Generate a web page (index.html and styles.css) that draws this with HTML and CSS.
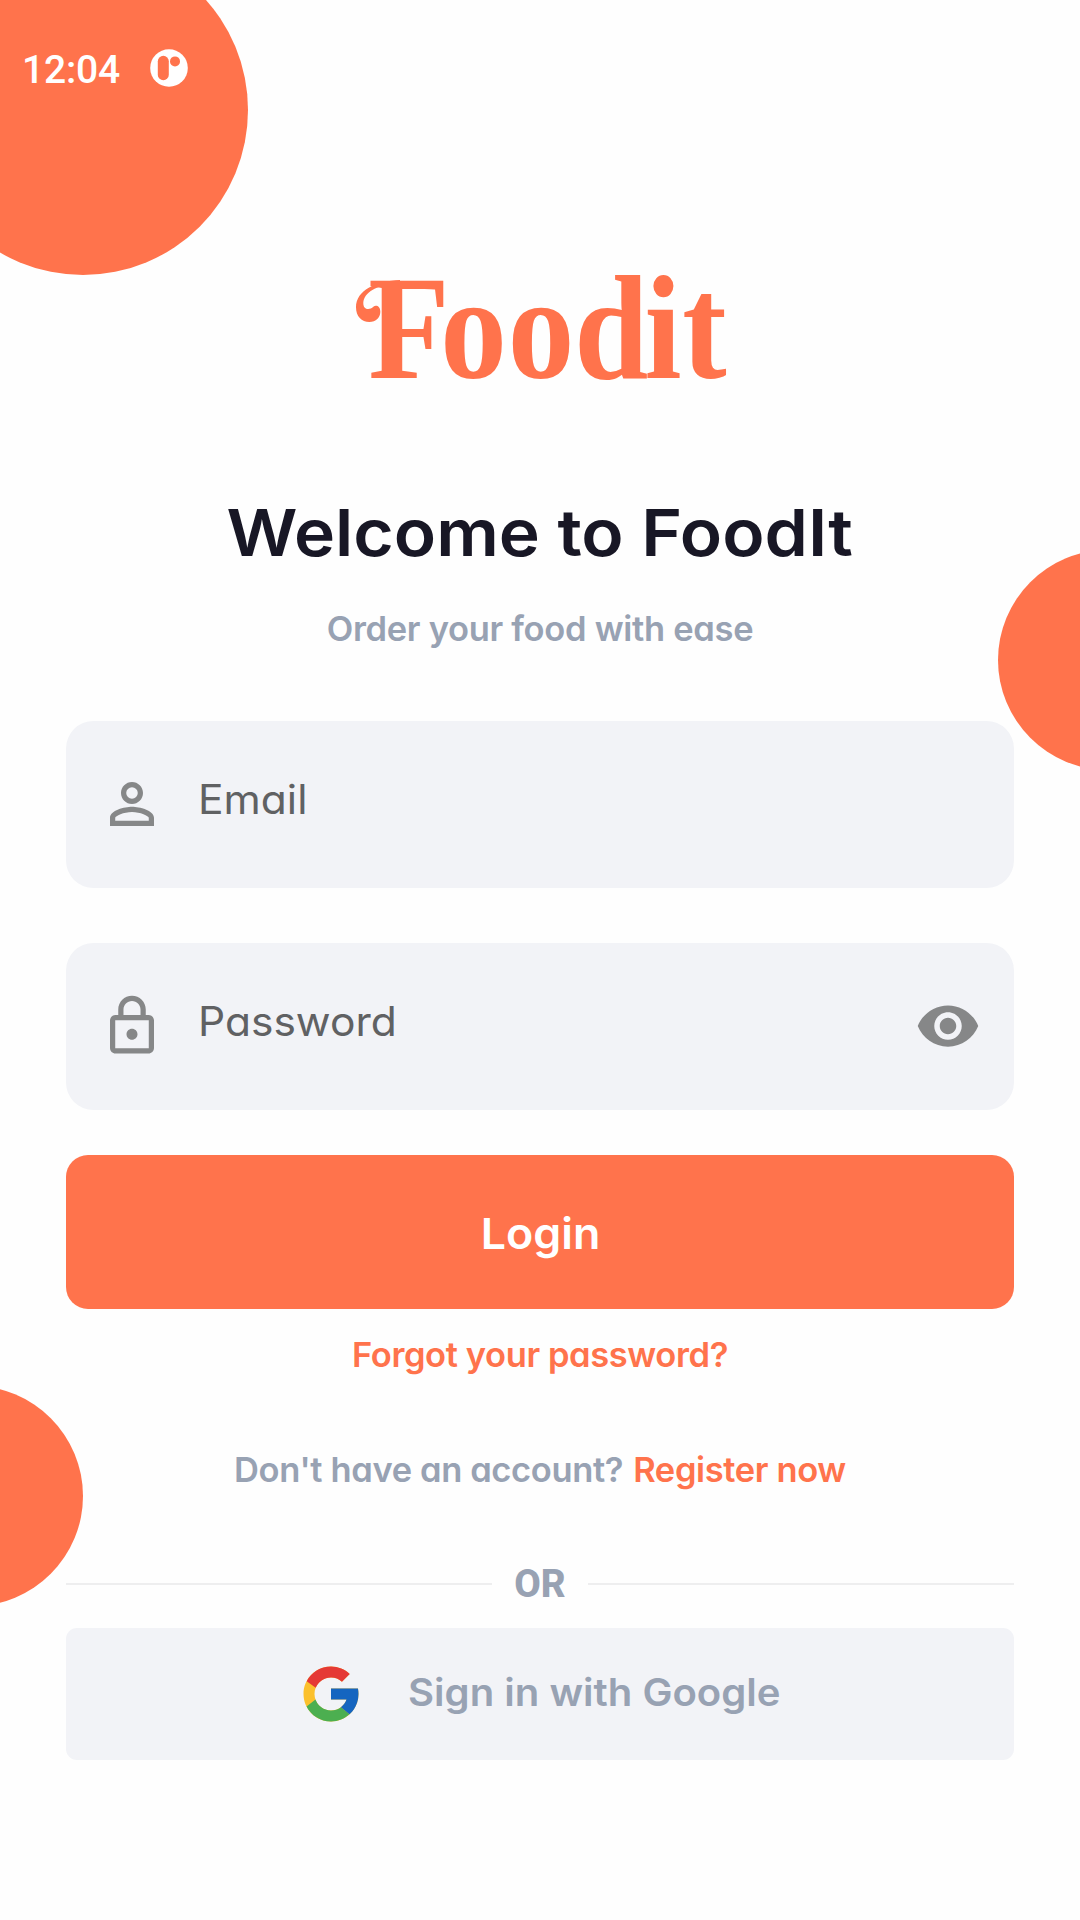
FILE: index.html
```html
<!DOCTYPE html>
<html lang="en">
<head>
<meta charset="utf-8">
<title>Foodit</title>
<link rel="stylesheet" href="styles.css">
</head>
<body>
<main class="screen">
  <div class="blob blob-top"></div>
  <div class="blob blob-right"></div>
  <div class="blob blob-left"></div>

  <header class="status">
    <span class="time">12:04</span>
    <svg class="status-icon" viewBox="0 0 38 38">
      <circle cx="19" cy="19" r="18.8" fill="#fff"/>
      <rect x="7.8" y="6.8" width="11" height="24.4" rx="5.5" fill="#ff734c"/>
      <circle cx="25" cy="12.4" r="5" fill="#ff734c"/>
    </svg>
  </header>

  <svg class="logo" viewBox="0 0 380 130" role="img" aria-label="Foodit">
    <!-- flourish leading into the wordmark -->
    <path class="swash" transform="translate(-12 -10) scale(.3333)" d="M180 60C110 62 48 90 48 142C48 170 65 186 88 186C108 186 121 172 121 155C121 138 108 134 100 140C92 148 78 150 72 140C62 110 95 80 145 76H180Z"/>
    <text class="logo-text" transform="scale(.9 1)" x="18 98 173 247 325 367" y="108">Foodit</text>
  </svg>

  <h1 class="title"><span>Welcome to FoodIt</span></h1>
  <p class="subtitle"><span>Order your food with ease</span></p>

  <div class="field">
    <svg class="icon" viewBox="0 0 24 24"><path d="M12 5.900a2.100 2.100 0 1 1 0 4.200 2.100 2.100 0 0 1 0-4.200m0 9c2.970 0 6.100 1.460 6.100 2.100v1.100H5.900V17c0-.64 3.130-2.100 6.100-2.100M12 4C9.790 4 8 5.790 8 8s1.790 4 4 4 4-1.790 4-4-1.790-4-4-4zm0 9c-2.670 0-8 1.340-8 4v3h16v-3c0-2.660-5.330-4-8-4z"/></svg>
    <span class="placeholder">Email</span>
  </div>
  <div class="field">
    <svg class="icon" viewBox="0 0 24 24"><path d="M18 8h-1V6c0-2.760-2.240-5-5-5S7 3.240 7 6v2H6c-1.100 0-2 .9-2 2v10c0 1.100.9 2 2 2h12c1.100 0 2-.9 2-2V10c0-1.100-.9-2-2-2zM8.900 6c0-1.710 1.390-3.100 3.100-3.100s3.100 1.390 3.100 3.100v2H8.900V6zM18.100 20.100H5.900V9.900h12.200v10.200zM12 17c1.100 0 2-.9 2-2s-.9-2-2-2-2 .9-2 2 .9 2 2 2z"/></svg>
    <span class="placeholder">Password</span>
    <svg class="icon eye" viewBox="0 0 24 24"><path d="M12 4.500C7 4.500 2.730 7.610 1 12c1.730 4.390 6 7.500 11 7.500s9.270-3.110 11-7.500c-1.730-4.390-6-7.500-11-7.500zM12 17c-2.760 0-5-2.240-5-5s2.240-5 5-5 5 2.240 5 5-2.240 5-5 5zm0-8c-1.660 0-3 1.340-3 3s1.340 3 3 3 3-1.340 3-3-1.340-3-3-3z"/></svg>
  </div>

  <button class="login"><span>Login</span></button>
  <a class="forgot">Forgot your password?</a>
  <p class="register"><span>Don't have an account?</span><a class="join">Register now</a></p>

  <div class="divider"><span>OR</span></div>

  <button class="google">
    <svg class="g-icon" viewBox="0 0 48 48">
      <path fill="#fbc02d" d="M43.611,20.083H42V20H24v8h11.303c-1.649,4.657-6.080,8-11.303,8c-6.627,0-12-5.373-12-12s5.373-12,12-12c3.059,0,5.842,1.154,7.961,3.039l5.657-5.657C34.046,6.053,29.268,4,24,4C12.955,4,4,12.955,4,24s8.955,20,20,20s20-8.955,20-20C44,22.659,43.862,21.350,43.611,20.083z"/>
      <path fill="#e53935" d="M6.306,14.691l6.571,4.819C14.655,15.108,18.961,12,24,12c3.059,0,5.842,1.154,7.961,3.039l5.657-5.657C34.046,6.053,29.268,4,24,4C16.318,4,9.656,8.337,6.306,14.691z"/>
      <path fill="#4caf50" d="M24,44c5.166,0,9.860-1.977,13.409-5.192l-6.190-5.238C29.211,35.091,26.715,36,24,36c-5.202,0-9.619-3.317-11.283-7.946l-6.522,5.025C9.505,39.556,16.227,44,24,44z"/>
      <path fill="#1565c0" d="M43.611,20.083L43.595,20L42,20H24v8h11.303c-0.792,2.237-2.231,4.166-4.087,5.571l6.193,5.236C36.971,39.205,44,34,44,24C44,22.659,43.862,21.350,43.611,20.083z"/>
    </svg>
    <span>Sign in with Google</span>
  </button>
</main>
</body>
</html>
```
FILE: styles.css
```css
* { box-sizing: border-box; }

body {
  margin: 0;
  background: #fefefe;
  font-family: Inter, "Open Sans", sans-serif;
  font-feature-settings: "cv11" 1; /* single-storey a */
}

.screen {
  position: relative;
  display: flex;
  flex-direction: column;
  width: 1080px;
  height: 1920px;
  padding: 0 66px;
  overflow: hidden;
}

.screen > :not(.blob) { position: relative; }

/* Decorative circles bleeding off the screen edges */
.blob { position: absolute; border-radius: 50%; background: #ff734c; }
.blob-top { left: -82.5px; top: -55px; width: 330px; height: 330px; }
.blob-right { left: 997.5px; top: 550px; width: 220px; height: 220px; }
.blob-left { left: -137.5px; top: 1386px; width: 220px; height: 220px; }

.status {
  display: flex;
  align-items: center;
  gap: 30px;
  height: 60px;
  margin: 40px 0 0 -44px;
  color: #fff;
}
.time { font: 500 39px/60px Roboto, sans-serif; letter-spacing: -.2px; }
.status-icon { width: 38px; height: 38px; margin-top: -5px; }

.logo { width: 380px; height: 130px; margin: 170px auto 0 286px; overflow: visible; }
.logo-text { font: bold 148px "Liberation Serif", serif; fill: #ff734c; }
.swash { fill: #ff734c; }

.title {
  margin: 93px 0 0;
  font-size: 65px;
  font-weight: 600;
  line-height: 80px;
  text-align: center;
  color: #181725;
}
.title span { display: inline-block; transform: scaleX(1.07); }
.subtitle {
  margin: 31px 0 66.8px;
  font-size: 34.5px;
  font-weight: 560;
  line-height: 50px;
  letter-spacing: -.3px;
  text-align: center;
  color: #98a2b3;
}

.field {
  display: flex;
  align-items: center;
  height: 167.5px;
  margin-bottom: 54.7px;
  padding: 0 33px;
  border-radius: 27.5px;
  background: #f2f3f7;
}
.icon { flex: none; width: 66px; height: 66px; margin-top: -1px; fill: #868788; }
.eye { margin-left: auto; }
.placeholder {
  margin-left: 33px;
  padding-bottom: 9px;
  font-size: 40.5px;
  font-weight: 380;
  line-height: 50px;
  color: #606163;
  transform: scaleX(1.05);
  transform-origin: left;
}

button { border: 0; padding: 0; font-family: inherit; font-feature-settings: inherit; }
.login {
  height: 154px;
  margin-top: -10.2px;
  padding-top: 2px;
  border-radius: 22px;
  background: #ff734c;
  font-size: 43px;
  font-weight: 620;
  color: #fff;
}
.login span { display: inline-block; transform: scaleX(1.04); }
.forgot {
  margin-top: 21px;
  font-size: 34.5px;
  font-weight: 560;
  line-height: 50px;
  letter-spacing: -.4px;
  text-align: center;
  color: #ff734c;
}
.register {
  display: flex;
  justify-content: center;
  gap: 10px;
  margin: 65px 0 0;
  font-size: 34.5px;
  font-weight: 560;
  line-height: 50px;
  letter-spacing: -.37px;
  color: #98a2b3;
}
.join { color: #ff734c; }

.divider {
  display: flex;
  align-items: center;
  gap: 22px;
  height: 50px;
  margin-top: 64px;
  font: 800 38.5px/50px Roboto, sans-serif;
  color: #98a2b3;
}
.divider::before, .divider::after { content: ""; flex: 1; height: 2px; background: #eeeeef; }
.divider span { padding-top: 1px; }

.google {
  display: flex;
  align-items: center;
  height: 132px;
  margin-top: 19px;
  padding-left: 232px;
  border-radius: 11px;
  background: #f2f3f7;
  font-size: 38px;
  font-weight: 600;
  color: #98a2b3;
}
.google span { padding-bottom: 3px; transform: scaleX(1.055); transform-origin: left; }
.g-icon { width: 66px; height: 66px; margin-right: 44px; }
```
